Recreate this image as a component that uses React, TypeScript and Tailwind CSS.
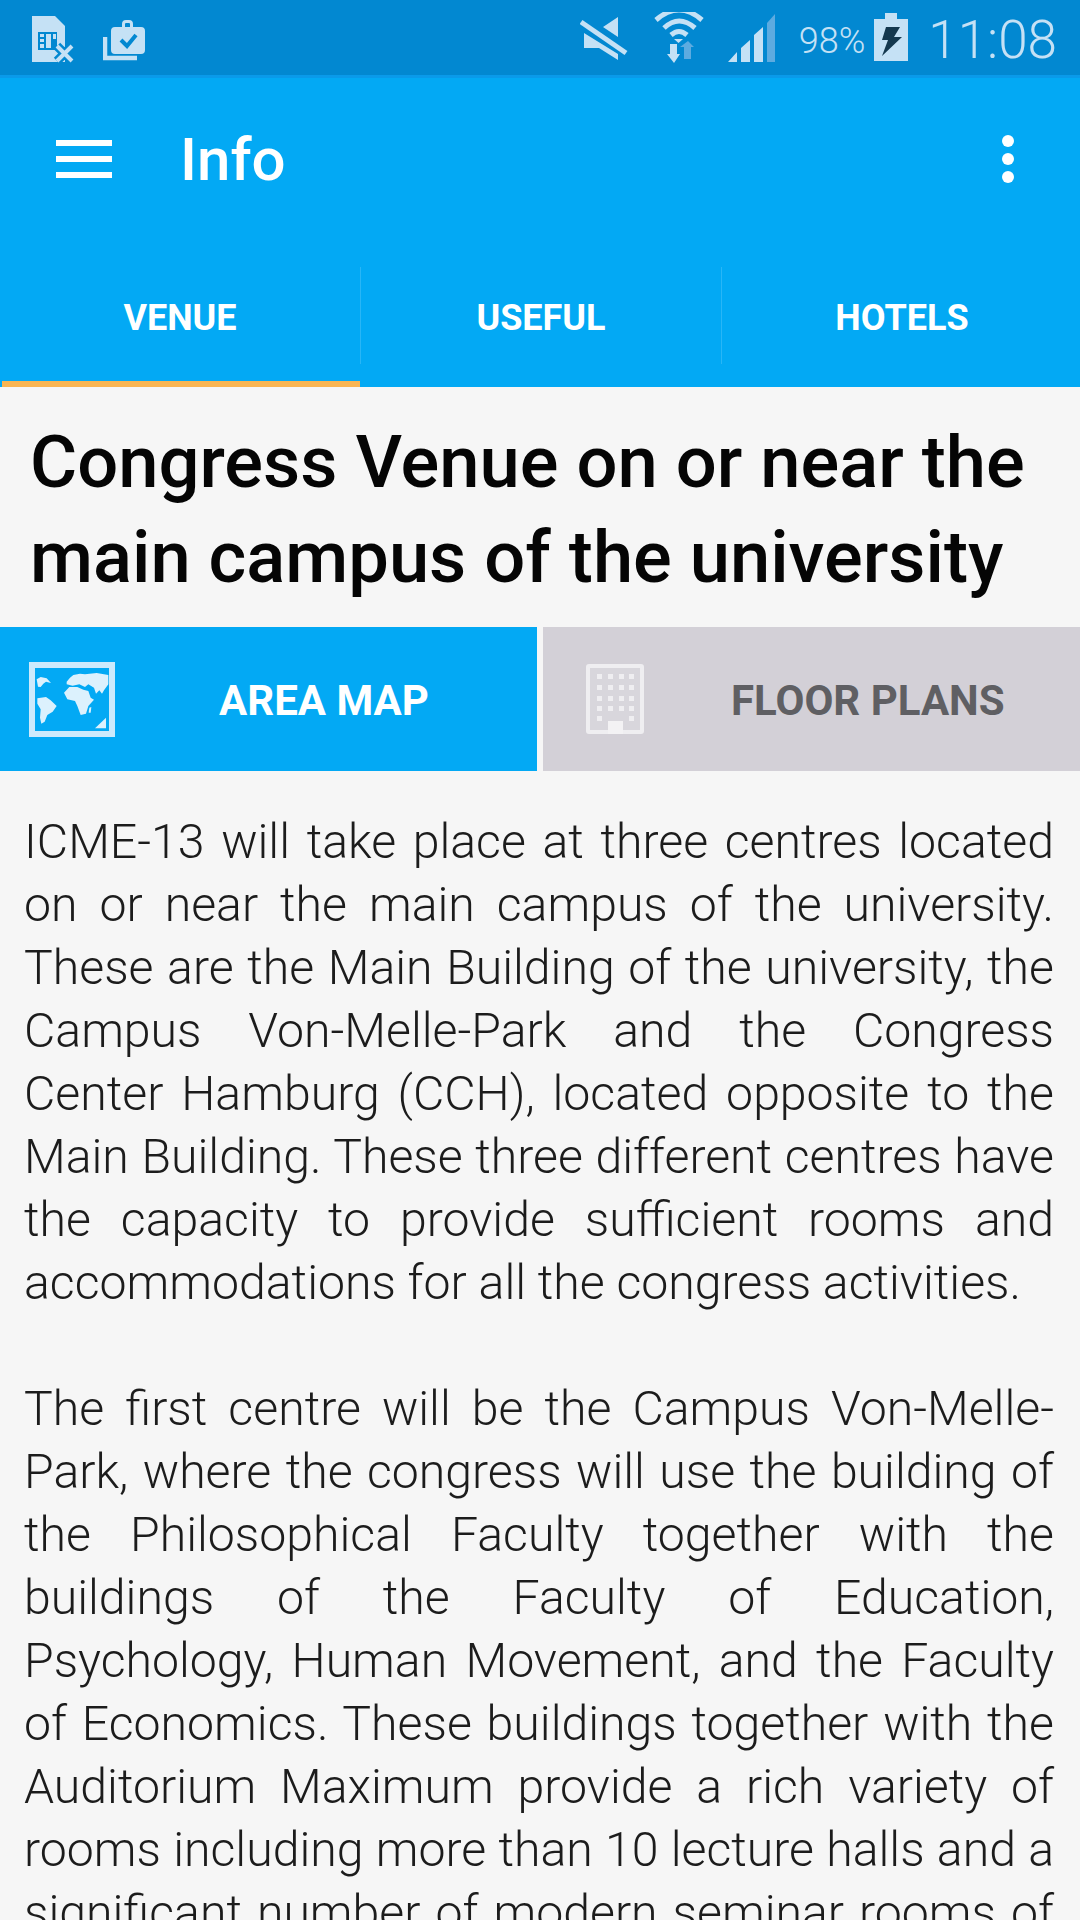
const paragraphs = [
  "ICME-13 will take place at three centres located on or near the main campus of the university. These are the Main Building of the university, the Campus Von-Melle-Park and the Congress Center Hamburg (CCH), located opposite to the Main Building. These three different centres have the capacity to provide sufficient rooms and accommodations for all the congress activities.",
  "The first centre will be the Campus Von-Melle-Park, where the congress will use the building of the Philosophical Faculty together with the buildings of the Faculty of Education, Psychology, Human Movement, and the Faculty of Economics. These buildings together with the Auditorium Maximum provide a rich variety of rooms including more than 10 lecture halls and a significant number of modern seminar rooms of different sizes.",
];

const WINDOWS = [12, 23, 34, 44].flatMap((y) => [13, 24, 35, 45].map((x) => ({ x, y }))).concat([
  { x: 13, y: 54 },
  { x: 45, y: 54 },
]);

function SimIcon() {
  return (
    <svg width="44" height="50" viewBox="32 13 44 50">
      <path d="M32 16h23l10 10v36H32z" fill="#c5e1f5" />
      <path d="M38 32h19v18H38z" fill="#0288d1" />
      <path d="M40 34h4v3h-4zM40 39h4v3h-4zM40 44h4v4h-4zM46 34h5v14h-5zM53 34h3v5h-3z" fill="#c5e1f5" />
      <path d="M57 46l15 15M72 46L57 61" stroke="#0288d1" strokeWidth="9" fill="none" />
      <path d="M57 46l15 15M72 46L57 61" stroke="#c5e1f5" strokeWidth="4" fill="none" />
    </svg>
  );
}

function WorkIcon() {
  return (
    <svg width="44" height="50" viewBox="103 13 44 50">
      <path d="M111 31a4 4 0 0 1 4-4h7v-3a4 4 0 0 1 4-4h3a4 4 0 0 1 4 4v3h8a4 4 0 0 1 4 4v19a4 4 0 0 1-4 4h-26a4 4 0 0 1-4-4z" fill="#c5e1f5" />
      <path d="M125 27v-3a1 1 0 0 1 1-1h3a1 1 0 0 1 1 1v3z" fill="#0288d1" />
      <path d="M121 40l6 6 9-11" stroke="#0288d1" strokeWidth="4" fill="none" />
      <path d="M105 37v21h32" stroke="#c5e1f5" strokeWidth="4.5" fill="none" />
    </svg>
  );
}

function MuteIcon() {
  return (
    <svg width="48" height="50" viewBox="579 13 48 50">
      <path d="M602 27l15-10v20zM583 33l34 21v6l-19-12h-15z" fill="#c5e1f5" />
      <path d="M580 22l45 31" stroke="#c5e1f5" strokeWidth="5" fill="none" />
    </svg>
  );
}

function WifiIcon() {
  return (
    <svg width="50" height="52" viewBox="653 13 50 52">
      <path d="M655 21Q678 1 701 21M663 29Q678 15 694 29M670 36Q678 29 686 36" stroke="#c5e1f5" strokeWidth="5" fill="none" />
      <path d="M673 40h9l-4.500 4z" fill="#c5e1f5" />
      <path d="M669 45h7v10h3l-6 9-7-9h3z" fill="#c5e1f5" />
      <path d="M687 42l6 6h-3v12h-7V48h-4z" fill="#5dabe0" />
    </svg>
  );
}

function SignalIcon() {
  return (
    <svg width="48" height="50" viewBox="726 13 48 50">
      <path d="M727 62l9-10v10zM740 62V48l9-8v22zM753 62V35l9-8v35z" fill="#c5e1f5" />
      <path d="M766 62V23l8-9v48z" fill="#5dabe0" />
    </svg>
  );
}

function BatteryIcon() {
  return (
    <svg width="34" height="50" viewBox="873 13 34 50">
      <path d="M884 13h12v6h11v42h-34V19h11z" fill="#c5e1f5" />
      <path d="M885 27h14l-6 10h8l-20 19 6-16h-6z" fill="#14384f" />
    </svg>
  );
}

function WorldIcon() {
  return (
    <svg width="86" height="75" viewBox="27 33 258 225">
      <rect x="36" y="42" width="240" height="207" fill="none" stroke="#cdeafc" strokeWidth="18" />
      <g fill="#dcf1fd">
        <path d="M50 85L62 78L80 82L93 96L78 92L70 98L62 108L54 107Z" />
        <path d="M52 142L78 138L92 148L110 165L98 182L82 192L74 212L64 218L60 200L62 175L52 158Z" />
        <path d="M140 92L150 80L160 72L180 68L195 70L230 66L265 72L265 100L252 118L246 128L238 118L228 128L222 110L205 100L195 108L178 100L158 104L140 100Z" />
        <path d="M132 125L148 108L172 108L190 116L205 120L212 140L222 146L205 165L198 188L182 192L172 165L165 150L142 145Z" />
        <path d="M208 170L214 168L212 185L206 185Z" />
        <path d="M225 232L258 200V232Z" />
      </g>
    </svg>
  );
}

function BuildingIcon() {
  return (
    <svg width="58" height="70" viewBox="0 0 58 70">
      <rect x="2" y="2" width="54" height="66" rx="1" fill="#d8d6dc" stroke="#efeef1" strokeWidth="4" />
      {WINDOWS.map((w) => (
        <rect key={`${w.x}-${w.y}`} x={w.x - 2} y={w.y - 2} width="5" height="5" fill="#efeef1" />
      ))}
      <rect x="22" y="57" width="15" height="13" fill="#f3f2f4" />
    </svg>
  );
}

export default function App() {
  return (
    <div className="flex h-[1920px] w-[1080px] flex-col overflow-hidden bg-[#f6f6f6] [font-family:Roboto,sans-serif]">
      <div className="flex h-[75px] shrink-0 items-start bg-[#0288d1] pt-[13px] pr-[23px] pl-[32px] text-[#c5e1f5]">
        <SimIcon />
        <div className="ml-[27px]">
          <WorkIcon />
        </div>
        <div className="ml-auto flex h-[50px] items-center">
          <MuteIcon />
          <div className="ml-[26px]">
            <WifiIcon />
          </div>
          <div className="ml-[23px]">
            <SignalIcon />
          </div>
          <span className="mt-[5px] ml-[24px] text-[36px] leading-none font-light">98%</span>
          <div className="ml-[9px]">
            <BatteryIcon />
          </div>
          <span className="mt-[4px] ml-[20px] text-[53px] leading-none font-light">11:08</span>
        </div>
      </div>

      <header className="flex h-[312px] shrink-0 flex-col border-t-[3px] border-[#0a9aea] bg-[#03a9f4] text-white">
        <div className="flex h-[161px] shrink-0 items-center pr-[66px] pl-[56px]">
          <div className="flex w-[56px] flex-col gap-[10px]">
            <span className="h-[6px] bg-white" />
            <span className="h-[6px] bg-white" />
            <span className="h-[6px] bg-white" />
          </div>
          <h1 className="mt-[3px] ml-[68px] text-[60px] leading-none font-medium">Info</h1>
          <div className="ml-auto flex flex-col gap-[6px]">
            <span className="h-[12px] w-[12px] rounded-full bg-white" />
            <span className="h-[12px] w-[12px] rounded-full bg-white" />
            <span className="h-[12px] w-[12px] rounded-full bg-white" />
          </div>
        </div>
        <nav className="mt-auto flex h-[120px] items-start text-[36px] font-bold">
          <div className="relative flex h-[120px] w-[360px] items-start justify-center pt-[24px]">
            VENUE
            <span className="absolute right-0 bottom-0 left-[2px] h-[6px] bg-[#f9b552]" />
          </div>
          <div className="flex h-[97px] w-[362px] justify-center border-x border-[#29b6f6] pt-[24px]">USEFUL</div>
          <div className="flex flex-1 justify-center pt-[24px] pl-[2px]">HOTELS</div>
        </nav>
      </header>

      <h2 className="mt-[28px] px-[30px] text-[72.3px] leading-[95px] font-medium text-[#050505]">
        Congress Venue on or near the main campus of the university
      </h2>

      <div className="mt-[22px] flex h-[144px] shrink-0 gap-[6px] text-[42px] font-bold">
        <div className="flex w-[537px] items-center bg-[#03a9f4] pl-[29px] text-white">
          <WorldIcon />
          <span className="ml-[104px] pt-[2px]">AREA MAP</span>
        </div>
        <div className="flex flex-1 items-center bg-[#d3d0d7] pl-[43px] text-[#5f5f63]">
          <BuildingIcon />
          <span className="ml-[87px] pt-[2px]">FLOOR PLANS</span>
        </div>
      </div>

      <main className="mt-[39px] flex flex-col gap-[63px] pr-[26px] pl-[24px] text-[48.2px] leading-[63px] font-light text-[#1c1c1c]">
        {paragraphs.map((text) => (
          <p key={text.slice(0, 12)} className="text-justify">
            {text}
          </p>
        ))}
      </main>
    </div>
  );
}
